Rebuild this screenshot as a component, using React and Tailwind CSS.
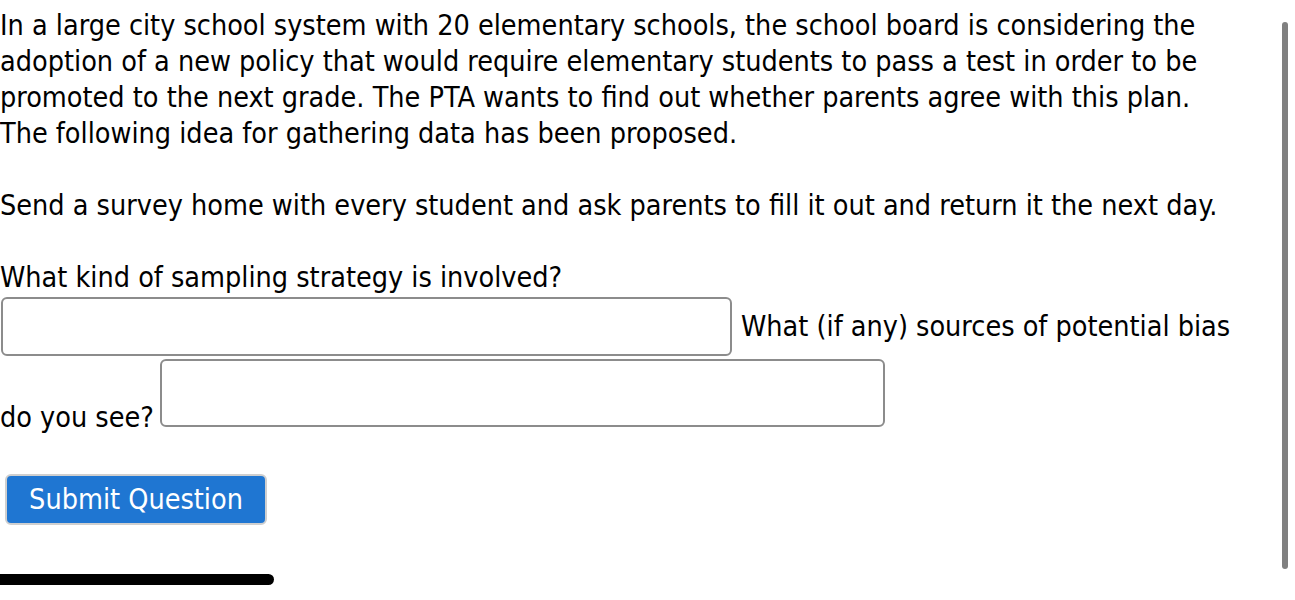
export default function App() {
  return (
    <div className="relative h-[600px] w-full overflow-hidden bg-white text-black">
      <div className="w-[1236px] pt-[8px] font-['DejaVu_Sans_Condensed','DejaVu_Sans',sans-serif] text-[28.5px] leading-[36px]">
        <p>
          In a large city school system with 20 elementary schools, the school board is considering the
          adoption of a new policy that would require elementary students to pass a test in order to be
          promoted to the next grade. The PTA wants to find out whether parents agree with this plan.
          The following idea for gathering data has been proposed.
        </p>
        <p className="mt-[36px]">
          Send a survey home with every student and ask parents to fill it out and return it the next day.
        </p>
        <p className="mt-[36px]">What kind of sampling strategy is involved?</p>

        <div className="mt-[1px] flex items-center gap-[9px]">
          <div className="ml-[1px] h-[59px] w-[731px] rounded-[6px] border-2 border-[#8c8c8c] bg-white" />
          <span>What (if any) sources of potential bias</span>
        </div>
        <div className="mt-[3px] flex items-end gap-[6px]">
          <span>do you see?</span>
          <div className="mb-[9px] h-[68px] w-[725px] rounded-[6px] border-2 border-[#8c8c8c] bg-white" />
        </div>

        <button className="ml-[5px] mt-[38px] flex h-[51px] w-[262px] items-center justify-center rounded-[6px] border-2 border-[#cfcfcf] bg-[#1f76d2] text-white">
          Submit Question
        </button>
      </div>

      <div className="mt-[49px] h-[11px] w-[274px] rounded-r-full bg-black" />

      {/* overlay scrollbar thumb */}
      <div className="absolute right-[7px] top-[22px] h-[547px] w-[6px] rounded-full bg-[#808080]" />
    </div>
  );
}
